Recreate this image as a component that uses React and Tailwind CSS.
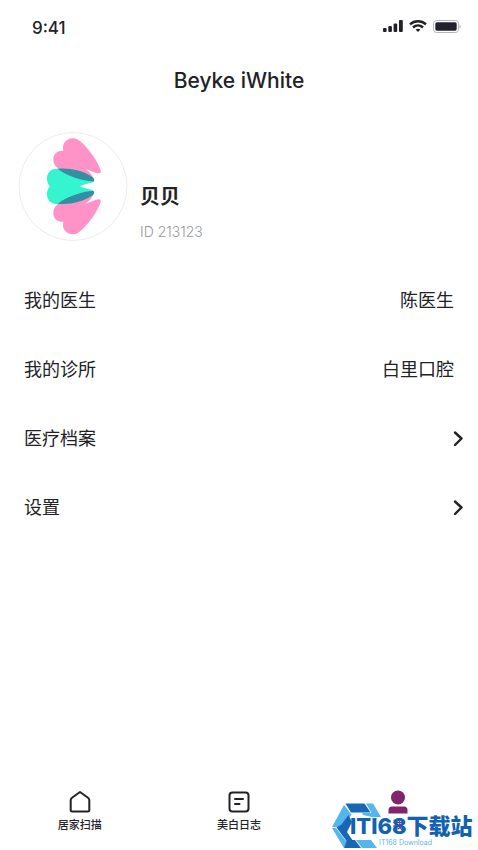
import React from 'react';

const rows = [
  { label: '我的医生', value: '陈医生' },
  { label: '我的诊所', value: '白里口腔' },
  { label: '医疗档案' },
  { label: '设置' },
];

const ChevronIcon = () => (
  <svg className="w-3 h-4" viewBox="0 0 12 16" fill="none" stroke="#222226" strokeWidth="2.4" strokeLinecap="round" strokeLinejoin="round">
    <path d="M3 1.500l6.500 6-6.500 6.500" />
  </svg>
);

const StatusBar = () => (
  <div className="flex items-center justify-between h-5 pl-8 pr-[17px]">
    <span className="text-[17px] leading-5 font-medium">9:41</span>
    <div className="flex items-center gap-[6px] -mt-1">
      <svg className="w-5 h-3" viewBox="0 0 20 12" fill="#222226">
        <rect x="0" y="8" width="3.6" height="4" rx="1" />
        <rect x="5.3" y="6" width="3.6" height="6" rx="1" />
        <rect x="10.6" y="3.5" width="3.6" height="8.5" rx="1" />
        <rect x="16" y="0" width="3.8" height="12" rx="1" />
      </svg>
      <svg className="w-[18px] h-3" viewBox="0 0 18 12" fill="none" stroke="#222226" strokeWidth="2.4">
        <path d="M1 4.400C5.500 .2 12.500 .2 17 4.400" />
        <path d="M4 7.500c2.900-2.700 7.100-2.700 10 0" />
        <path d="M9 12L6.600 9.600c1.400-1.200 3.400-1.200 4.800 0z" fill="#222226" stroke="none" />
      </svg>
      <svg className="w-7 h-[13px]" viewBox="0 0 28 13">
        <rect x=".5" y=".5" width="25" height="12" rx="3" fill="none" stroke="#b5b3bc" />
        <rect x="2.300" y="2.300" width="21.400" height="8.400" rx="1.600" fill="#222230" />
        <path d="M26.500 4.500c1.600.7 1.600 3.300 0 4z" fill="#b5b3bc" />
      </svg>
    </div>
  </div>
);

const Wing = () => (
  <>
    <path
      d="M45.300 18.800C43.500 11 49 6.300 54.700 6.300c4.300 0 6.500 2 9.800 5 7 6.600 15 17.500 18 26.700 1 2.700-.5 3.800-3 3.200-4-.8-8-2.700-12.500-4.700 4 2.800 7.500 6.500 9 11 .5 2-1 2.700-3 2.200C62 48.500 50 45 42 37.500c-4.500-2-6.700-6-6.700-10.200 0-5.500 4.500-9 10-8.500z"
      fill="#ff93c8"
    />
    <path
      d="M32.300 54.800C27.500 50 28 41.500 33 38.200c2.500-1.500 5.500-1.700 9-1.500 11 .3 23 2.900 31.500 7.900 2.200 1.300 3 2.500 2.700 4-.3 1.500-1.500 1.800-3 2.200-4 .9-7.700 1.700-11.200 3.500v.5z"
      fill="#34f5d0"
    />
    <path
      d="M39.500 36.800c12-1.200 25.500 1.800 34 7.700 2.500 1.500 3.200 3.500 2 5C64 49 50 44.500 39.500 36.800z"
      fill="#348fa3"
    />
  </>
);

const Avatar = () => (
  <svg className="w-[110px] h-[110px]" viewBox="0 0 110 110">
    <circle cx="55" cy="54.500" r="54" fill="#fff" stroke="#ececec" />
    <Wing />
    <g transform="matrix(1 0 0 -1 0 108.600)">
      <Wing />
    </g>
  </svg>
);

const HomeIcon = () => (
  <svg className="w-6 h-6" viewBox="0 0 24 24" fill="none" stroke="#222226" strokeWidth="2" strokeLinejoin="round">
    <path d="M12 2l8 5.700q1.300 .9 1.300 2.300V20q0 1.500-1.500 1.500H4.200q-1.500 0-1.500-1.500V10q0-1.400 1.300-2.300z" />
  </svg>
);

const JournalIcon = () => (
  <svg className="w-6 h-6" viewBox="0 0 24 24" fill="none" stroke="#222226" strokeWidth="2" strokeLinecap="round">
    <rect x="2.500" y="2.500" width="19" height="19" rx="3" />
    <path d="M8 9h8M8 14h4.500" />
  </svg>
);

const ProfileIcon = () => (
  <svg className="w-6 h-6" viewBox="0 0 24 24" fill="#80246c">
    <circle cx="12" cy="7.500" r="7" />
    <path d="M2.500 23.500V20q0-3.500 3.500-3.500h12q3.500 0 3.500 3.500v3.500z" />
  </svg>
);

const tabs = [
  { label: '居家扫描', Icon: HomeIcon },
  { label: '美白日志', Icon: JournalIcon },
  { label: '我', Icon: ProfileIcon, active: true },
];

const Watermark = () => (
  <div className="absolute right-1 bottom-0 w-[142px] h-12 pointer-events-none">
    <svg className="absolute left-0 top-0 w-[66px] h-12" viewBox="0 0 66 48">
      <path d="M13.500 1.500h19l6 9H19z" fill="#1767b5" />
      <path d="M34 1.500h7L49 15h-9l-9-2-1-2h9.500z" fill="#54b6ec" />
      <path d="M12 3l7.500 9.500L13 21l-5 4H0z" fill="#54b6ec" />
      <path d="M4.500 25.500l5-3 7-9.500 3.500 7-5 10 8 12-8-2.500z" fill="#1767b5" />
      <path d="M0 26h4l11 14-3 6z" fill="#54b6ec" />
      <path d="M15 38h8l6 8H12z" fill="#1767b5" />
      <path d="M24 38h15l6 8H30z" fill="#54b6ec" />
    </svg>
    <span className="absolute left-[18px] top-3 text-[22px] leading-6 font-extrabold text-[#1262b0] whitespace-nowrap">
      ITI68下载站
    </span>
    <span className="absolute left-[47px] top-[37px] text-[7px] leading-2 text-[#5eb5e8] whitespace-nowrap">IT168 Download</span>
  </div>
);

const App = () => (
  <div className="relative min-h-screen flex flex-col bg-white text-[#222226] font-['Inter','Noto_Sans_CJK_SC',sans-serif]">
    <header className="pt-[18px]">
      <StatusBar />
      <h1 className="mt-[29px] text-center text-[21px] leading-7 font-medium">Beyke iWhite</h1>
    </header>

    <main className="flex-1">
      {/* Profile */}
      <section className="flex mt-[37px] pl-[18px] gap-3">
        <Avatar />
        <div className="pt-[51px]">
          <h2 className="text-xl leading-7 font-bold">贝贝</h2>
          <p className="mt-[11px] text-sm leading-5 font-light text-[#999]">ID 213123</p>
        </div>
      </section>

      {/* Menu */}
      <ul className="mt-6">
        {rows.map(({ label, value }) => (
          <li key={label}>
            <button type="button" className="w-full h-[69px] flex items-center justify-between pl-6 pr-[14px] text-lg">
              <span>{label}</span>
              {value ? <span className="pr-[10px]">{value}</span> : <ChevronIcon />}
            </button>
          </li>
        ))}
      </ul>
    </main>

    <nav className="grid grid-cols-3 pb-[17px]">
      {tabs.map(({ label, Icon, active }) => (
        <button key={label} type="button" className="flex flex-col items-center gap-[3px]">
          <Icon />
          <span className={active ? 'text-[11px] leading-4 font-medium text-[#80246c]' : 'text-[11px] leading-4 font-medium'}>{label}</span>
        </button>
      ))}
    </nav>

    <Watermark />
  </div>
);

export default App;
